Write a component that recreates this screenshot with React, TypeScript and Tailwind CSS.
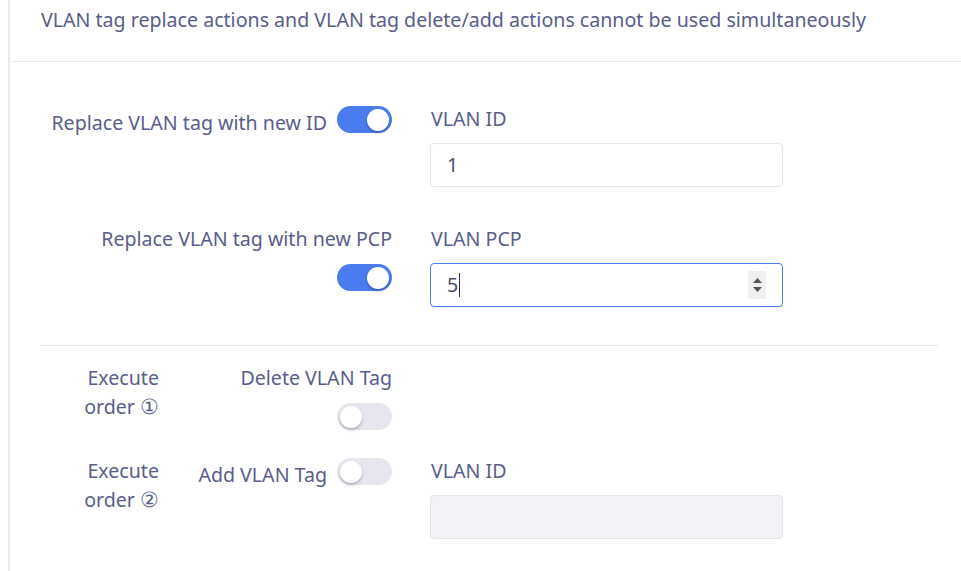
import { useState } from 'react';

const font = { fontFamily: '"Noto Sans", "Open Sans", sans-serif' };

function Toggle({ on }: { on: boolean }) {
    return (
        <span
            className={`relative inline-flex h-[27px] w-[55px] shrink-0 items-center rounded-full ${on ? 'bg-[#4a7cf0]' : 'bg-[#e6e6ef]'}`}
        >
            <span
                className={`absolute top-[2.5px] h-[22px] w-[22px] rounded-full bg-white shadow-[0_2px_3px_rgba(0,0,40,0.25)] ${on ? 'left-[30px]' : 'left-[3px]'}`}
            />
        </span>
    );
}

function Field({ label, value, focused, disabled, spinner }: { label: string; value?: string; focused?: boolean; disabled?: boolean; spinner?: boolean }) {
    return (
        <div className="flex w-[353px] flex-col">
            <div className="h-[28px] pl-[1px] leading-[28px]">{label}</div>
            <div
                className={`mt-[10px] flex h-[44px] items-center rounded-[4px] border px-[16px] ${focused ? 'border-[#4a7cf0]' : 'border-[#e4e4ec]'} ${disabled ? 'bg-[#f2f3f7]' : 'bg-white'}`}
            >
                <span className="text-[#4a4d6e]">{value}</span>
                {focused && <span className="ml-[1px] h-[24px] w-px bg-[#333]" />}
                {spinner && (
                    <span className="ml-auto flex h-[28px] w-[18px] flex-col items-center justify-center gap-[4px] bg-[#efefef]">
                        <svg width="9" height="5" viewBox="0 0 9 5"><path d="M4.5 0L9 5H0z" fill="#555" /></svg>
                        <svg width="9" height="5" viewBox="0 0 9 5"><path d="M0 0h9L4.5 5z" fill="#555" /></svg>
                    </span>
                )}
            </div>
        </div>
    );
}

export default function App() {
    const [pcp] = useState('5');

    return (
        <div className="min-h-[571px] bg-white text-[19.6px] text-[#595d8c]" style={font}>
            <div className="ml-[8px] min-h-[571px] border-l-2 border-[#e8e8ef]">
                {/* notice */}
                <div className="border-b border-[#e6e6ec] pb-[27px] pl-[31px] pt-[6px] leading-[28px]">
                    VLAN tag replace actions and VLAN tag delete/add actions cannot be used simultaneously
                </div>

                <div className="pl-[31px] pr-[22px]">
                    {/* replace ID */}
                    <div className="flex pt-[43px]">
                        <div className="flex w-[351px] items-start justify-end gap-[10px]">
                            <span className="mt-[4px] whitespace-nowrap leading-[28px]">Replace VLAN tag with new ID</span>
                            <span className="mt-[1px]"><Toggle on /></span>
                        </div>
                        <div className="ml-[38px]">
                            <Field label="VLAN ID" value="1" />
                        </div>
                    </div>

                    {/* replace PCP */}
                    <div className="flex pt-[38px]">
                        <div className="flex w-[351px] flex-col items-end gap-[11px]">
                            <span className="whitespace-nowrap leading-[28px]">Replace VLAN tag with new PCP</span>
                            <Toggle on />
                        </div>
                        <div className="ml-[38px]">
                            <Field label="VLAN PCP" value={pcp} focused spinner />
                        </div>
                    </div>

                    <div className="mt-[38px] w-[897px] border-t border-[#e6e6ec]" />

                    {/* delete */}
                    <div className="flex pt-[18px]">
                        <div className="w-[118px] text-right leading-[28px]">
                            Execute<br />order <span className="text-[21px]">①</span>
                        </div>
                        <div className="flex w-[233px] flex-col items-end gap-[11px]">
                            <span className="whitespace-nowrap leading-[28px]">Delete VLAN Tag</span>
                            <Toggle on={false} />
                        </div>
                    </div>

                    {/* add */}
                    <div className="flex pt-[27px]">
                        <div className="w-[118px] text-right leading-[28px]">
                            Execute<br />order <span className="text-[21px]">②</span>
                        </div>
                        <div className="flex w-[233px] items-start justify-end gap-[10px]">
                            <span className="mt-[4px] whitespace-nowrap leading-[28px]">Add VLAN Tag</span>
                            <span className="mt-[1px]"><Toggle on={false} /></span>
                        </div>
                        <div className="ml-[38px]">
                            <Field label="VLAN ID" disabled />
                        </div>
                    </div>
                </div>
            </div>
        </div>
    );
}
